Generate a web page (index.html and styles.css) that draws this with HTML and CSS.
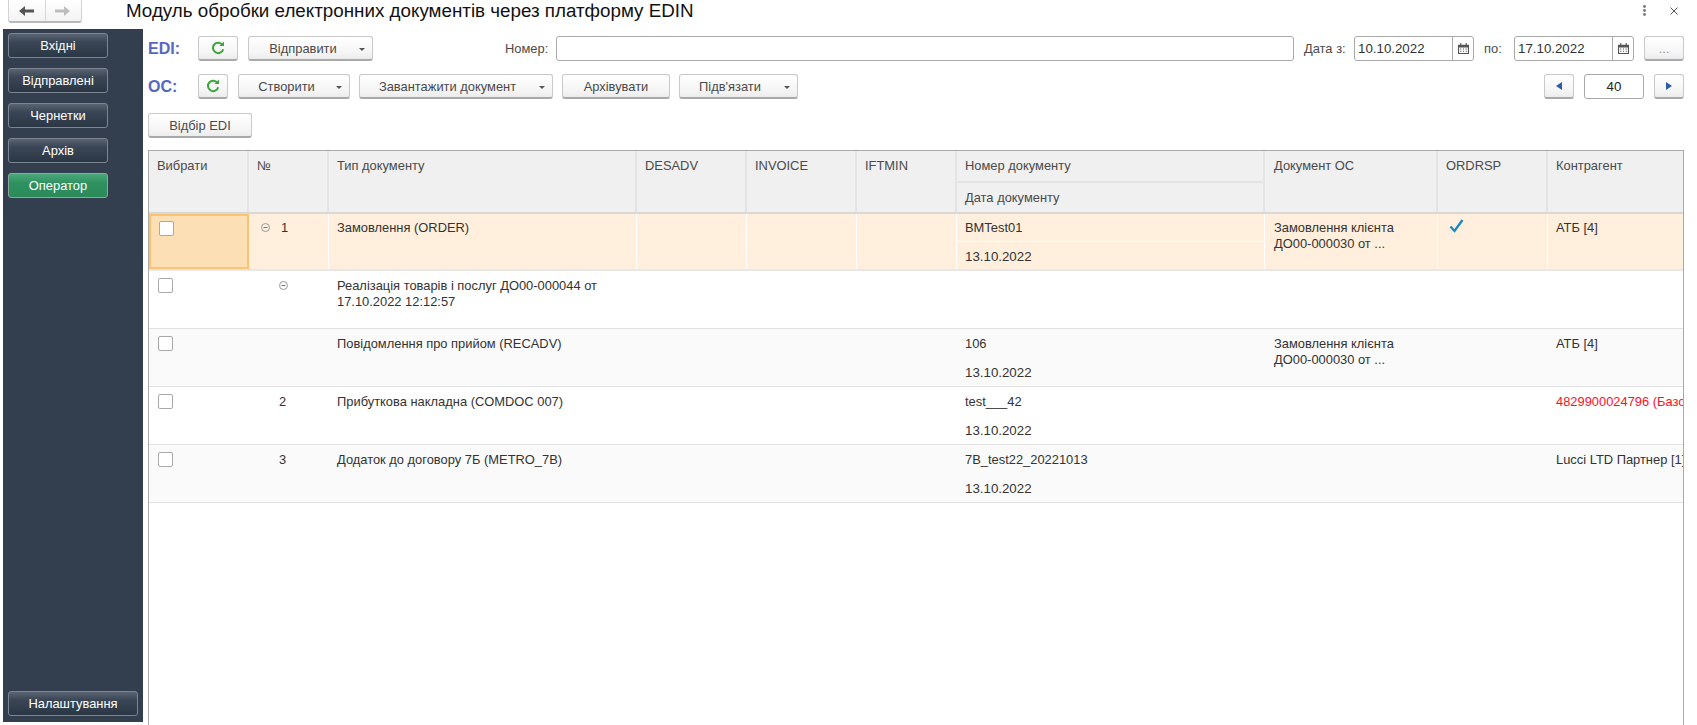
FILE: index.html
```html
<!DOCTYPE html>
<html lang="uk">
<head>
<meta charset="utf-8">
<title>Модуль обробки електронних документів через платформу EDIN</title>
<link rel="stylesheet" href="styles.css">
</head>
<body>
<div class="app">
  <header class="topbar">
    <div class="history">
      <button class="hist-btn hist-back" type="button"><svg width="16" height="12" viewBox="0 0 16 12"><path d="M0 6 L6 1 V4.6 H15 V7.4 H6 V11 Z" fill="#555"/></svg></button>
      <button class="hist-btn" type="button"><svg width="16" height="12" viewBox="0 0 16 12"><path d="M15 6 L9 1 V4.6 H0 V7.4 H9 V11 Z" fill="#bdbdbd"/></svg></button>
    </div>
    <h1 class="title">Модуль обробки електронних документів через платформу EDIN</h1>
    <div class="win-tools">
      <svg width="3" height="11" viewBox="0 0 3 11"><circle cx="1.5" cy="1.5" r="1.4" fill="#777"/><circle cx="1.5" cy="5.5" r="1.4" fill="#777"/><circle cx="1.5" cy="9.5" r="1.4" fill="#777"/></svg>
      <svg width="8" height="8" viewBox="0 0 8 8"><path d="M0.5 0.5 L7.5 7.5 M7.5 0.5 L0.5 7.5" stroke="#555" stroke-width="1" fill="none"/></svg>
    </div>
  </header>
  <div class="body">
    <nav class="sidebar">
      <button class="side-btn" type="button">Вхідні</button>
      <button class="side-btn" type="button">Відправлені</button>
      <button class="side-btn" type="button">Чернетки</button>
      <button class="side-btn" type="button">Архів</button>
      <button class="side-btn side-active" type="button">Оператор</button>
      <button class="side-btn side-settings" type="button">Налаштування</button>
    </nav>
    <main class="content">
      <div class="toolbar tb-edi">
        <span class="tb-label">EDI:</span>
        <button class="btn w-refresh-l" type="button"><svg class="refresh" width="14" height="14" viewBox="0 0 14 14"><path d="M11.6 4.2 A5.2 5.2 0 1 0 12.2 8.2" fill="none" stroke="#3aa63a" stroke-width="2"/><path d="M8.4 4.9 H13 V0.6 Z" fill="#3aa63a"/></svg></button>
        <button class="btn w-send" type="button"><span class="btn-text">Відправити</span><i class="caret"></i></button>
        <label class="field-label lbl-num">Номер:</label>
        <div class="input input-grow"></div>
        <label class="field-label lbl-date">Дата з:</label>
        <div class="input date"><span class="date-val">10.10.2022</span><span class="date-pick"><svg width="11" height="11" viewBox="0 0 10 10"><path d="M0 1.5h10v8.5H0z M1 4v5h8V4z" fill="#555" fill-rule="evenodd"/><path d="M2 0h1v2H2zM7 0h1v2H7zM2 5h1v1H2zM4.5 5h1v1h-1zM7 5h1v1H7zM2 7h1v1H2zM4.5 7h1v1h-1zM7 7h1v1H7z" fill="#555"/></svg></span></div>
        <label class="field-label lbl-to">по:</label>
        <div class="input date"><span class="date-val">17.10.2022</span><span class="date-pick"><svg width="11" height="11" viewBox="0 0 10 10"><path d="M0 1.5h10v8.5H0z M1 4v5h8V4z" fill="#555" fill-rule="evenodd"/><path d="M2 0h1v2H2zM7 0h1v2H7zM2 5h1v1H2zM4.5 5h1v1h-1zM7 5h1v1H7zM2 7h1v1H2zM4.5 7h1v1h-1zM7 7h1v1H7z" fill="#555"/></svg></span></div>
        <button class="btn w-dots" type="button"><span class="dots">...</span></button>
      </div>
      <div class="toolbar tb-os">
        <span class="tb-label">ОС:</span>
        <button class="btn w-refresh-s" type="button"><svg class="refresh" width="14" height="14" viewBox="0 0 14 14"><path d="M11.6 4.2 A5.2 5.2 0 1 0 12.2 8.2" fill="none" stroke="#3aa63a" stroke-width="2"/><path d="M8.4 4.9 H13 V0.6 Z" fill="#3aa63a"/></svg></button>
        <button class="btn w-create" type="button"><span class="btn-text">Створити</span><i class="caret"></i></button>
        <button class="btn w-load" type="button"><span class="btn-text">Завантажити документ</span><i class="caret"></i></button>
        <button class="btn w-arch" type="button"><span class="btn-text">Архівувати</span></button>
        <button class="btn w-link" type="button"><span class="btn-text">Підв'язати</span><i class="caret"></i></button>
        <div class="pager">
          <button class="btn w-page" type="button"><svg width="6" height="8" viewBox="0 0 6 8"><path d="M6 0V8L0 4Z" fill="#2a5caa"/></svg></button>
          <div class="input page-num">40</div>
          <button class="btn w-page" type="button"><svg width="6" height="8" viewBox="0 0 6 8"><path d="M0 0V8L6 4Z" fill="#2a5caa"/></svg></button>
        </div>
      </div>
      <div class="toolbar tb-filter">
        <button class="btn w-filter" type="button"><span class="btn-text">Відбір EDI</span></button>
      </div>
      <section class="grid">
        <div class="row head">
          <div class="cell">Вибрати</div>
          <div class="cell">№</div>
          <div class="cell">Тип документу</div>
          <div class="cell">DESADV</div>
          <div class="cell">INVOICE</div>
          <div class="cell">IFTMIN</div>
          <div class="cell stack"><div class="sub">Номер документу</div><div class="sub">Дата документу</div></div>
          <div class="cell doc">Документ ОС</div>
          <div class="cell">ORDRSP</div>
          <div class="cell">Контрагент</div>
        </div>
        <div class="row data current">
          <div class="cell check focused"><span class="box"></span></div>
          <div class="cell num lvl0"><svg class="tree" width="9" height="9" viewBox="0 0 9 9"><circle cx="4.5" cy="4.5" r="4" fill="none" stroke="#999"/><path d="M2.5 4.5h4" stroke="#777"/></svg><span>1</span></div>
          <div class="cell">Замовлення (ORDER)</div>
          <div class="cell"></div>
          <div class="cell"></div>
          <div class="cell"></div>
          <div class="cell stack"><div class="sub">BMTest01</div><div class="sub">13.10.2022</div></div>
          <div class="cell doc">Замовлення клієнта ДО00-000030 от ...</div>
          <div class="cell mark"><svg width="15" height="14" viewBox="0 0 15 14"><path d="M1.5 7.5 L5.5 12 L13.5 1" fill="none" stroke="#1787c9" stroke-width="2.3"/></svg></div>
          <div class="cell">АТБ [4]</div>
        </div>
        <div class="row data plain">
          <div class="cell check"><span class="box"></span></div>
          <div class="cell num lvl1"><svg class="tree" width="9" height="9" viewBox="0 0 9 9"><circle cx="4.5" cy="4.5" r="4" fill="none" stroke="#999"/><path d="M2.5 4.5h4" stroke="#777"/></svg></div>
          <div class="cell cell-wide">Реалізація товарів і послуг ДО00-000044 от 17.10.2022 12:12:57</div>
          <div class="cell"></div>
          <div class="cell"></div>
          <div class="cell"></div>
          <div class="cell stack"><div class="sub"></div><div class="sub"></div></div>
          <div class="cell"></div>
          <div class="cell"></div>
          <div class="cell"></div>
        </div>
        <div class="row data alt">
          <div class="cell check"><span class="box"></span></div>
          <div class="cell num"></div>
          <div class="cell">Повідомлення про прийом (RECADV)</div>
          <div class="cell"></div>
          <div class="cell"></div>
          <div class="cell"></div>
          <div class="cell stack"><div class="sub">106</div><div class="sub">13.10.2022</div></div>
          <div class="cell doc">Замовлення клієнта ДО00-000030 от ...</div>
          <div class="cell"></div>
          <div class="cell">АТБ [4]</div>
        </div>
        <div class="row data plain">
          <div class="cell check"><span class="box"></span></div>
          <div class="cell num lvl1"><span>2</span></div>
          <div class="cell">Прибуткова накладна (COMDOC 007)</div>
          <div class="cell"></div>
          <div class="cell"></div>
          <div class="cell"></div>
          <div class="cell stack"><div class="sub">test___42</div><div class="sub">13.10.2022</div></div>
          <div class="cell"></div>
          <div class="cell"></div>
          <div class="cell clip red">4829900024796 (Базо</div>
        </div>
        <div class="row data alt">
          <div class="cell check"><span class="box"></span></div>
          <div class="cell num lvl1"><span>3</span></div>
          <div class="cell">Додаток до договору 7Б (METRO_7B)</div>
          <div class="cell"></div>
          <div class="cell"></div>
          <div class="cell"></div>
          <div class="cell stack"><div class="sub">7B_test22_20221013</div><div class="sub">13.10.2022</div></div>
          <div class="cell"></div>
          <div class="cell"></div>
          <div class="cell clip">Lucci LTD Партнер [1]</div>
        </div>
      </section>
    </main>
  </div>
</div>
</body>
</html>
```
FILE: styles.css
```css
* { box-sizing: border-box; }
html, body { margin: 0; height: 100%; overflow: hidden; background: #fff; }
body { font-family: "Liberation Sans", Arial, sans-serif; font-size: 12.9px; color: #333; }
button { font: inherit; margin: 0; padding: 0; }
.app { height: 725px; display: flex; flex-direction: column; }

.topbar { height: 29px; flex: none; display: flex; align-items: flex-start; padding: 0 19px 0 8px; }
.history { display: flex; width: 74px; height: 23px; border: 1px solid #d2d2d2; border-top: 0; border-bottom: 2px solid #b9b9b9; border-radius: 0 0 3px 3px; background: linear-gradient(#fff, #f3f3f3); }
.hist-btn { flex: 1; border: 0; background: none; display: flex; align-items: center; justify-content: center; }
.hist-back { border-right: 1px solid #d8d8d8; }
.title { margin: 0 0 0 44px; font-size: 18.8px; font-weight: 400; line-height: 22px; color: #111; }
.win-tools { margin-left: auto; padding-top: 5px; display: flex; gap: 24px; align-items: center; }

.body { flex: 1; display: flex; min-height: 0; padding-left: 3px; }
.sidebar { width: 140px; height: 693px; flex: none; background: #333f4f; padding: 4px 5px 6px; display: flex; flex-direction: column; gap: 10px; }
.side-btn { width: 100px; height: 25px; flex: none; color: #fff; border: 1px solid #7d8590; border-radius: 3px; background: linear-gradient(#5a6472 0, #3a4655 35%, #2c3745 100%); text-align: center; }
.side-active { background: linear-gradient(#4aa77a 0, #2f9160 40%, #2b8a59 100%); border-color: #8fa89b; }
.side-settings { width: 130px; margin-top: auto; }

.content { flex: 1; min-width: 0; padding: 7px 13px 0 5px; display: flex; flex-direction: column; }
.toolbar { display: flex; align-items: center; flex: none; }
.tb-edi { height: 25px; }
.tb-os { height: 25px; margin-top: 13px; }
.tb-filter { height: 25px; margin-top: 14px; }
.tb-label { width: 50px; flex: none; font-size: 16px; font-weight: 700; color: #5468c0; }

.btn { height: 25px; flex: none; display: flex; align-items: center; justify-content: center; position: relative; border: 1px solid #c9c9c9; border-bottom: 2px solid #a9a9a9; border-radius: 3px; background: linear-gradient(#fff, #f5f5f5 70%, #ececec); color: #4a4a4a; }
.btn-text { display: block; }
.caret { position: absolute; right: 7px; top: 11px; width: 0; height: 0; border: 3px solid transparent; border-top: 3px solid #555; border-bottom: 0; }
.w-refresh-l { width: 40px; margin-right: 10px; }
.w-refresh-s { width: 30px; margin-right: 10px; }
.w-send { width: 125px; padding-right: 15px; }
.w-create { width: 112px; margin-right: 9px; padding-right: 15px; }
.w-load { width: 194px; margin-right: 9px; padding-right: 17px; }
.w-arch { width: 108px; margin-right: 9px; }
.w-link { width: 119px; padding-right: 17px; }
.w-dots { width: 40px; margin-left: 10px; }
.dots { color: #999; }
.w-page { width: 30px; }
.w-filter { width: 104px; }

.field-label { flex: none; color: #4a4a4a; }
.lbl-num { width: 44px; margin: 0 7px 0 132px; }
.lbl-date { width: 43px; margin: 0 7px 0 10px; white-space: nowrap; }
.lbl-to { width: 20px; margin: 0 10px 0 10px; }
.input { height: 25px; border: 1px solid #a9a9a9; border-radius: 3px; background: #fff; }
.input-grow { flex: 1; min-width: 0; }
.date { width: 120px; flex: none; display: flex; align-items: stretch; }
.date-val { flex: 1; padding: 0 3px; line-height: 23px; color: #333; font-size: 13.3px; }
.date-pick { width: 21px; border-left: 1px solid #a9a9a9; display: flex; align-items: center; justify-content: center; }
.pager { margin-left: auto; display: flex; gap: 10px; }
.page-num { width: 60px; text-align: center; line-height: 23px; color: #222; font-size: 13.3px; }

.grid { flex: 1; margin-top: 12px; border: 1px solid #a9a9a9; border-bottom: 0; overflow: hidden; min-height: 0; }
.row { display: grid; grid-template-columns: 100px 80px 308px 110px 110px 100px 308px 173px 110px minmax(0, 1fr); }
.head { height: 63px; background: #f0f0f0; border-bottom: 2px solid #d8d8d8; color: #4a4a4a; }
.head .cell { border-right: 2px solid #e4e4e4; }
.head .cell:last-child { border-right: 0; }
.cell { padding: 7px 8px 0; line-height: 16px; min-width: 0; }
.cell.doc { padding-left: 9px; }

.stack { padding: 0; display: flex; flex-direction: column; }
.stack .sub { flex: 1; padding: 7px 8px 0; }
.head .stack .sub:first-child { border-bottom: 2px solid #e4e4e4; }
.data .sub:last-child { font-size: 13.3px; }

.data { height: 58px; border-bottom: 1px solid #e3e3e3; }
.plain { background: #fff; }
.alt { background: #fafafa; }
.current { background: #ffefdc; height: 57px; border-bottom: 2px solid #e8e8e8; }
.current .cell { border-right: 1px solid #fff; padding-top: 6px; }
.current .cell:last-child { border-right: 0; }
.current .stack { padding-top: 0; }
.current .sub { padding-top: 6px; }
.current .sub:last-child { padding-top: 7px; }
.current .stack .sub:first-child { border-bottom: 1px solid #fff; }
.current .focused { background: #fddfb6; border: 2px solid #fbc271; padding: 5px 8px 0; }
.check { padding: 7px 9px 0; }
.box { display: block; width: 15px; height: 15px; border: 1px solid #a9a9a9; border-radius: 2px; background: #fff; }
.num { display: flex; align-items: flex-start; }
.tree { flex: none; margin-top: 3px; }
.lvl0 { padding-left: 12px; gap: 11px; }
.lvl1 { padding-left: 30px; }
.cell-wide { padding-right: 40px; }
.current .mark { padding: 5px 0 0 11px; }
.clip { white-space: nowrap; overflow: hidden; padding-right: 0; }
.red { color: #ff0f1f; }
```
